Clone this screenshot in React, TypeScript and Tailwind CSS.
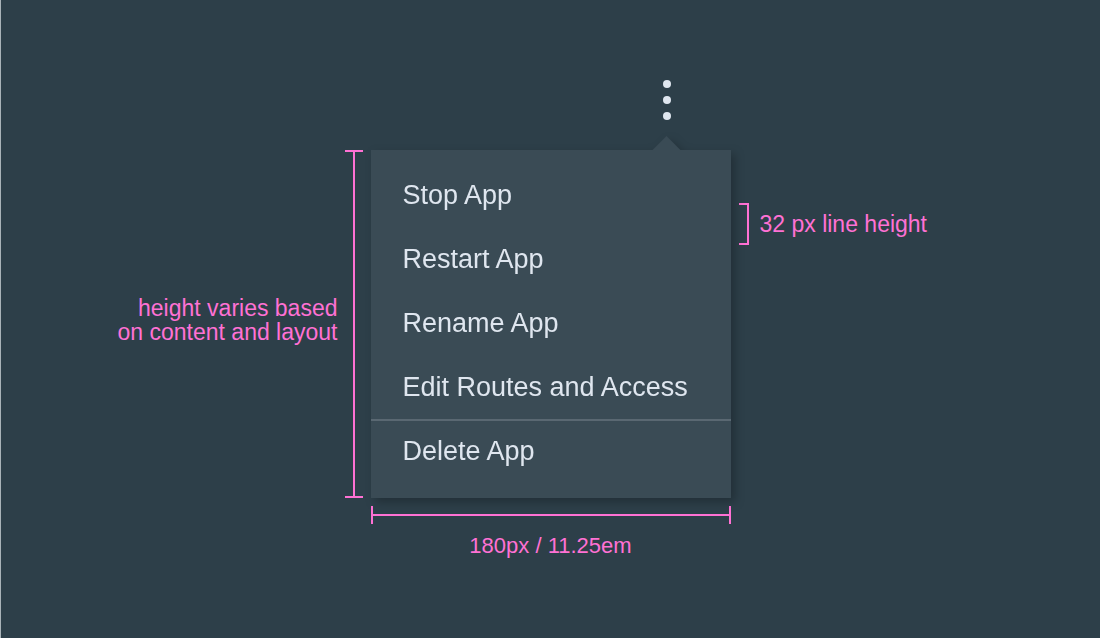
const actions = ['Stop App', 'Restart App', 'Rename App', 'Edit Routes and Access'];

const itemClass =
  'flex h-16 w-full items-center px-8 text-left text-[27px] leading-8 whitespace-nowrap text-[#dfe6ef]';

function VerticalMeasure() {
  return (
    <div className="flex w-[18px] shrink-0 flex-col items-center self-stretch text-[#ff71d4]">
      <div className="h-0.5 w-full bg-current" />
      <div className="w-0.5 flex-1 bg-current" />
      <div className="h-0.5 w-full bg-current" />
    </div>
  );
}

function HorizontalMeasure() {
  return (
    <div className="flex h-[18px] items-center text-[#ff71d4]">
      <div className="h-full w-0.5 bg-current" />
      <div className="h-0.5 flex-1 bg-current" />
      <div className="h-full w-0.5 bg-current" />
    </div>
  );
}

export default function App() {
  return (
    <main
      className="min-h-screen border-l border-[#a9b3b8] bg-[#2d3f49] pt-20 text-[23px] leading-6 text-[#ff71d4]"
      style={{ fontFamily: '"Liberation Sans", Arial, sans-serif' }}
    >
      <div className="grid grid-cols-[1fr_360px_1fr]">
        <div className="col-start-2 flex justify-end pr-[60px] pb-[30px]">
          <button
            type="button"
            aria-label="App actions"
            aria-haspopup="menu"
            aria-expanded="true"
            className="flex h-10 w-2 flex-col justify-between"
          >
            <span className="size-2 rounded-full bg-[#dfe6ef]" />
            <span className="size-2 rounded-full bg-[#dfe6ef]" />
            <span className="size-2 rounded-full bg-[#dfe6ef]" />
          </button>
        </div>

        <div className="col-start-1 row-start-2 flex items-center justify-end gap-[7px] pr-2">
          <p className="pb-2 text-right">
            height varies based
            <br />
            on content and layout
          </p>
          <VerticalMeasure />
        </div>

        <div className="relative col-start-2 row-start-2 bg-[#3a4b55] pt-[13px] pb-[17px] drop-shadow-[4px_4px_5px_rgba(0,0,0,0.25)]">
          <svg
            className="absolute right-[50px] bottom-full"
            width="29"
            height="14"
            viewBox="0 0 29 14"
            aria-hidden="true"
          >
            <path d="M0.5 14 L14.5 0 L28.5 14 Z" fill="#3a4b55" />
          </svg>
          <ul role="menu" aria-label="App actions">
            {actions.map((action) => (
              <li key={action} role="none">
                <button type="button" role="menuitem" className={itemClass}>
                  {action}
                </button>
              </li>
            ))}
            <li role="none" className="border-t-2 border-[#5a6872]">
              <button
                type="button"
                role="menuitem"
                className="flex h-[60px] w-full items-center px-8 text-left text-[27px] leading-8 whitespace-nowrap text-[#dfe6ef]"
              >
                Delete App
              </button>
            </li>
          </ul>
        </div>

        <div className="col-start-3 row-start-2 flex items-start pt-[53px] pl-2">
          <div className="flex items-center gap-[11px]">
            <div className="h-[42px] w-2.5 border-y-2 border-r-2 border-[#ff71d4]" />
            <p className="whitespace-nowrap">32 px line height</p>
          </div>
        </div>

        <div className="col-start-2 row-start-3 pt-2">
          <HorizontalMeasure />
          <p className="pt-2.5 text-center text-[22px]">180px / 11.25em</p>
        </div>
      </div>
    </main>
  );
}
